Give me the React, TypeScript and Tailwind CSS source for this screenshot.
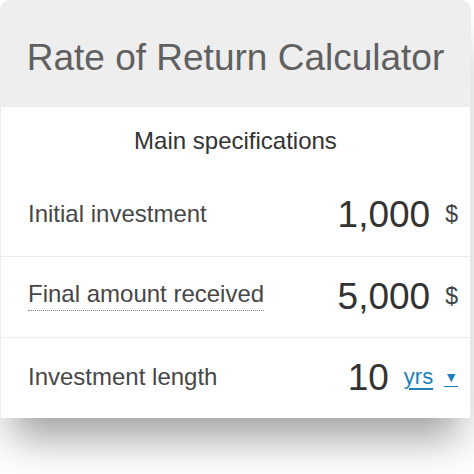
const rows = [
  { label: 'Initial investment', value: '1,000', unit: '$', dotted: false },
  { label: 'Final amount received', value: '5,000', unit: '$', dotted: true },
  { label: 'Investment length', value: '10', unit: 'yrs', dotted: false },
];

export default function App() {
  return (
    <div className="h-[474px] w-[474px] overflow-hidden bg-white font-['Liberation_Sans',Arial,sans-serif]">
      <div className="w-[471px] rounded-t-[10px] border-x border-[#ececec] bg-white shadow-[0_32px_40px_-12px_rgba(0,0,0,0.38)]">
        <div className="flex h-[107px] items-center justify-center rounded-t-[10px] bg-[#eeeeee] pt-[8px]">
          <h1 className="text-[37px] leading-none text-[#606060]">Rate of Return Calculator</h1>
        </div>
        <div className="flex h-[73px] items-center justify-center pb-[6px]">
          <span className="text-[24px] text-[#333]">Main specifications</span>
        </div>
        {rows.map((row, i) => (
          <div
            key={row.label}
            className={
              i === 0
                ? 'flex h-[76px] items-center justify-between pb-[8px] pl-[27px] pr-[12px]'
                : 'flex h-[81px] items-center justify-between border-t border-[#ececec] pb-[2px] pl-[27px] pr-[12px]'
            }
          >
            <span
              className={
                row.dotted
                  ? 'border-b border-dotted border-[#888] pb-[4px] text-[24px] leading-none text-[#474747]'
                  : 'text-[24px] leading-none text-[#474747]'
              }
            >
              {row.label}
            </span>
            <div className="flex items-center">
              <span className="text-[37px] leading-none text-[#333]">{row.value}</span>
              {row.unit === '$' ? (
                <span className="ml-[15px] text-[23px] leading-none text-[#444]">$</span>
              ) : (
                <span className="ml-[15px] flex items-center text-[22px] leading-none text-[#1e80b8] underline underline-offset-[4px]">
                  yrs<span className="ml-[11px] text-[14px]">▼</span>
                </span>
              )}
            </div>
          </div>
        ))}
      </div>
    </div>
  );
}
